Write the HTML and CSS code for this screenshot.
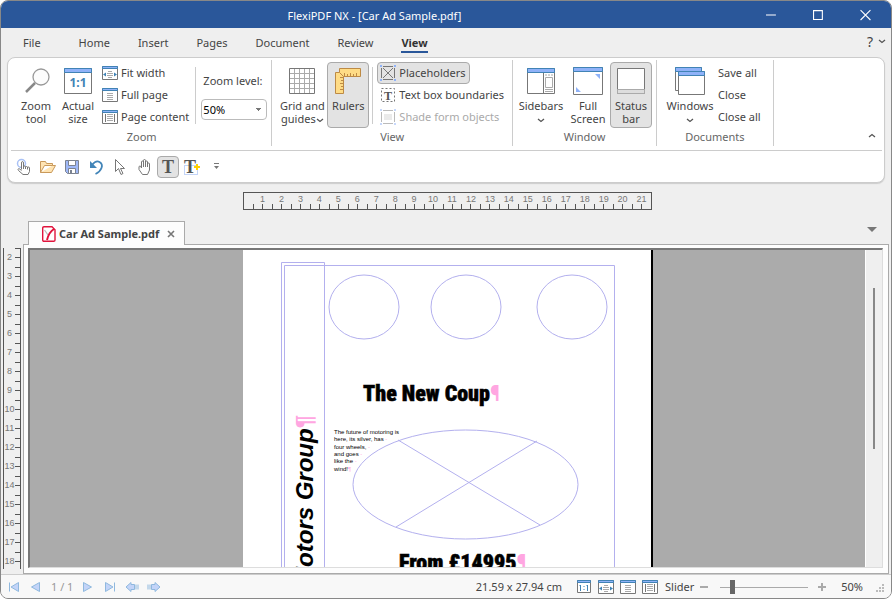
FILE: index.html
```html
<!DOCTYPE html>
<html lang="en">
<head>
<meta charset="utf-8">
<title>FlexiPDF NX - [Car Ad Sample.pdf]</title>
<link rel="stylesheet" href="styles.css">
</head>
<body>
<svg class="defs" aria-hidden="true">
  <symbol id="i-actual" viewBox="0 0 16 16"><path class="wf" d="M1.500 1.500h13v12h-13z"/><path class="hd" d="M1.500 1.500h13v2h-13z"/><path class="bl" d="M4.500 6v6M3.500 6.500h1M11.500 6v6M10.500 6.500h1M8 7v1M8 10v1"/></symbol>
  <symbol id="i-fit" viewBox="0 0 16 16"><path class="wf" d="M.5 1.500h15v13H.5z"/><path class="hd" d="M.5 1.500h15v2H.5z"/><path class="ln" d="M6 6.500h4M5 8.500h6M5 10.500h6M6 12.500h4"/><path class="bf" d="M1 9.500l3-2v4zM15 9.500l-3-2v4z"/></symbol>
  <symbol id="i-full" viewBox="0 0 16 16"><path class="wf" d="M.5 1.500h15v13H.5z"/><path class="hd" d="M.5 1.500h15v2H.5z"/><path class="ln" d="M5 6.500h6M5 8.500h6M5 10.500h6M5 12.500h6"/></symbol>
  <symbol id="i-content" viewBox="0 0 16 16"><path class="wf" d="M.5 1.500h15v13H.5z"/><path class="hd" d="M.5 1.500h15v2H.5z"/><path class="st" d="M3.500 5v8M12.500 5v8"/><path class="ln" d="M5 5.500h6M5 7.500h6M5 9.500h6M5 11.500h6"/></symbol>
  <symbol id="i-down" viewBox="0 0 8 5"><path class="chev" d="M1 1l3 2.500L7 1"/></symbol>
</svg>
<div class="window">
  <header class="titlebar">
    <h1>FlexiPDF NX - [Car Ad Sample.pdf]</h1>
    <div class="caption">
      <button aria-label="Minimize"><svg viewBox="0 0 10 10"><path d="M0 5.500h9"/></svg></button>
      <button aria-label="Maximize"><svg viewBox="0 0 10 10"><path d="M.5 1.500h8v8h-8z"/></svg></button>
      <button aria-label="Close"><svg viewBox="0 0 10 10"><path d="M.5 1l9 9M9.500 1l-9 9"/></svg></button>
    </div>
  </header>

  <nav class="menu">
    <a href="#" class="file">File</a><a href="#">Home</a><a href="#">Insert</a><a href="#">Pages</a><a href="#">Document</a><a href="#">Review</a><a href="#" class="active">View</a>
    <button class="help" aria-label="Help"><span>?</span><svg class="chevron"><use href="#i-down"/></svg></button>
  </nav>

  <section class="ribbon">
    <div class="groups">
      <div class="group">
        <div class="tools zoom-tools">
          <button class="big"><svg viewBox="0 0 32 32"><circle cx="21" cy="12" r="8" fill="#fcfcfc" stroke="#999" stroke-width="1.300"/><path d="M15 18l-9 9" stroke="#888" stroke-width="2.500"/></svg><span>Zoom<br>tool</span></button>
          <button class="big"><svg viewBox="0 0 32 32"><path class="wf" d="M2.500 3.500h27v25h-27z"/><path class="hd" d="M2.500 3.500h27v4h-27z"/><text x="16" y="22" class="ratio">1:1</text></svg><span>Actual<br>size</span></button>
          <div class="stack">
            <button class="small"><svg><use href="#i-fit"/></svg><span>Fit width</span></button>
            <button class="small"><svg><use href="#i-full"/></svg><span>Full page</span></button>
            <button class="small"><svg><use href="#i-content"/></svg><span>Page content</span></button>
          </div>
          <div class="level">
            <label for="zoom">Zoom level:</label>
            <select id="zoom"><option>50%</option></select>
          </div>
        </div>
        <h2>Zoom</h2>
      </div>
      <div class="group">
        <div class="tools view-tools">
          <button class="big wide"><svg viewBox="0 0 32 32"><path class="ln" d="M8.500 4v25M13.500 4v25M18.500 4v25M23.500 4v25M4 8.500h25M4 13.500h25M4 18.500h25M4 23.500h25"/><path class="st" d="M3.500 3.500h25v25h-25z"/></svg><span>Grid and<br>guides<svg class="chevron"><use href="#i-down"/></svg></span></button>
          <button class="big pressed" aria-pressed="true"><svg viewBox="0 0 32 32"><path class="rule" d="M7.500 3.500h21v8h-17l-4-4z"/><path class="rule" d="M3.500 7.500h4l4 4v17h-8z"/><path class="rule" d="M12.500 8v3M15.500 9v2M18.500 8v3M21.500 9v2M24.500 8v3M8 12.500h3M9 15.500h2M8 18.500h3M9 21.500h2M8 24.500h3"/></svg><span>Rulers</span></button>
          <div class="stack">
            <button class="small pressed" aria-pressed="true"><svg viewBox="0 0 16 16"><path class="st" d="M3 1.500h10M3 14.500h10M1.500 3v10M14.500 3v10M3 3l10 10M13 3L3 13"/><path class="dot" d="M0 0h2v2H0zM14 0h2v2h-2zM0 14h2v2H0zM14 14h2v2h-2z"/></svg><span>Placeholders</span></button>
            <button class="small"><svg viewBox="0 0 16 16"><path class="st dash" d="M1.500 1.500h13v13h-13z"/><text x="8" y="13" class="tee">T</text></svg><span>Text box boundaries</span></button>
            <button class="small" disabled><svg viewBox="0 0 16 16"><path class="pale" d="M3 1.500h10M3 14.500h10M1.500 3v10M14.500 3v10"/><path fill="#eaeaea" d="M4 5h8v6H4z"/><path class="dot faint" d="M0 0h2v2H0zM14 0h2v2h-2zM0 14h2v2H0zM14 14h2v2h-2z"/></svg><span>Shade form objects</span></button>
          </div>
        </div>
        <h2>View</h2>
      </div>
      <div class="group">
        <div class="tools window-tools">
          <button class="big wide"><svg viewBox="0 0 32 32"><path class="wf" d="M2.500 3.500h27v25h-27z"/><path class="hd" d="M2.500 3.500h27v4h-27z"/><path class="st" d="M18.500 8v20"/><path class="ln" d="M20.500 12.500h7v10h-7zM20 10h2M23 10h2M26 10h2M20 24.500h8M20 26.500h8"/></svg><span>Sidebars<br><svg class="chevron"><use href="#i-down"/></svg></span></button>
          <button class="big"><svg viewBox="0 0 32 32"><path class="wf" d="M1.500 2.500h29v27h-29z"/><path class="hd" d="M1.500 2.500h29v4h-29z"/><path class="dot" d="M23 9h5v5zM4 22v5h5z"/></svg><span>Full<br>Screen</span></button>
          <button class="big pressed" aria-pressed="true"><svg viewBox="0 0 32 32"><path class="wf" d="M2.500 3.500h27v25h-27z"/><path d="M2.500 24.500h27v4h-27z" fill="#ddd" stroke="#aaa"/></svg><span>Status<br>bar</span></button>
        </div>
        <h2>Window</h2>
      </div>
      <div class="group">
        <div class="tools doc-tools">
          <button class="big wide"><svg viewBox="0 0 32 32"><path class="wf" d="M1.500 2.500h26v23h-26z"/><path class="hd" d="M1.500 2.500h26v4h-26z"/><path class="wf" d="M4.500 6.500h26v23h-26z"/><path class="hd" d="M4.500 6.500h26v4h-26z"/></svg><span>Windows<br><svg class="chevron"><use href="#i-down"/></svg></span></button>
          <div class="stack">
            <button class="small"><span>Save all</span></button>
            <button class="small"><span>Close</span></button>
            <button class="small"><span>Close all</span></button>
          </div>
        </div>
        <h2>Documents</h2>
      </div>
      <button class="collapse" aria-label="Collapse ribbon"><svg class="chevron up"><use href="#i-down"/></svg></button>
    </div>
    <div class="quick">
      <button aria-label="Touch mode"><svg viewBox="0 0 16 16"><circle cx="5.500" cy="4.500" r="4" fill="none" stroke="#a9c1f5" stroke-width="1.500"/><path class="hand" d="M5.500 10.500V4q0-1.500 1-1.500t1 1.500v4q0-1 1-1t1 1v.5q0-1 1-1t1 1V9q0-1 1-1t1 1v3.500l-1.500 3h-5L2.500 11.500q-1-1.500 0-1.800 1-.3 3 1.800M7.500 8v2M9.500 8v2M11.500 8.500v2"/></svg></button>
      <button aria-label="Open"><svg viewBox="0 0 16 16"><path d="M.5 13.500v-11h5l1 2h6v2H4.500l-4 7h11l4-7h-3" fill="#ffe4b3" stroke="#c9995a" stroke-linejoin="round"/></svg></button>
      <button aria-label="Save"><svg viewBox="0 0 16 16"><path d="M1.500 1.500h13v13h-11l-2-2z" fill="#9fb8f7" stroke="#7b8290"/><path d="M4.500 1.500h7v5h-7zM4.500 9.500h7v5h-7z" fill="#fff" stroke="#7b8290"/><path d="M6 11h2v3H6z" fill="#7b8290"/></svg></button>
      <button aria-label="Undo"><svg viewBox="0 0 16 16"><path d="M4 6q4-5 7.500-3t2 6-6 6" fill="none" stroke="#4385b8" stroke-width="1.800"/><path d="M2 2v7h7z" fill="#4385b8"/></svg></button>
      <button aria-label="Select"><svg viewBox="0 0 16 16"><path class="hand" d="M3.500.5v12l3-3 2.500 6 2-1-2.500-5h4z"/></svg></button>
      <button aria-label="Pan"><svg viewBox="0 0 16 16"><path class="hand" d="M5.500 8V3q0-1 1-1t1 1V1.500q0-1 1-1t1 1V3q0-1 1-1t1 1v2q0-1 1-1t1 1v6l-2 4.500h-5l-3.500-5V8q0-1 1-1t1.500 2V4M7.500 3v5M9.500 3v5M11.500 4v4"/></svg></button>
      <button class="pressed" aria-label="Edit text" aria-pressed="true"><svg viewBox="0 0 16 16"><text x="8" y="14" class="tee large">T</text></svg></button>
      <button aria-label="Add text"><svg viewBox="0 0 16 16"><path d="M.5 6.500h13v9H.5z" fill="none" stroke="#89aaf0" stroke-dasharray="1 1"/><text x="6" y="14" class="tee large">T</text><path d="M13 5v6M10 8h6" stroke="#ffd200" stroke-width="2"/></svg></button>
      <button aria-label="Customize toolbar"><svg viewBox="0 0 16 16"><path d="M6 4.500h5" stroke="#777"/><path d="M6 7h5l-2.500 3z" fill="#777"/></svg></button>
    </div>
  </section>

  <div class="hruler"><span>1</span><span>2</span><span>3</span><span>4</span><span>5</span><span>6</span><span>7</span><span>8</span><span>9</span><span>10</span><span>11</span><span>12</span><span>13</span><span>14</span><span>15</span><span>16</span><span>17</span><span>18</span><span>19</span><span>20</span><span>21</span></div>

  <div class="tabs">
    <div class="tab">
      <svg viewBox="0 0 14 16"><path d="M2 .7h8l3 3V14q0 1.300-1.300 1.300H2Q.7 15.300.7 14V2Q.7.7 2 .7z" fill="#fff" stroke="#e0143c" stroke-width="1.400"/><path d="M2.500 4l3.500 5" stroke="#bbb" stroke-width="1.300"/><path d="M12 3Q7 6 5 14" fill="none" stroke="#e0143c" stroke-width="2"/></svg>
      <span>Car Ad Sample.pdf</span>
      <button aria-label="Close tab"><svg viewBox="0 0 8 8"><path d="M1 1l6 6M7 1L1 7" stroke="#777" stroke-width="1.600"/></svg></button>
    </div>
    <button class="tablist" aria-label="Tab list"></button>
  </div>

  <div class="work">
    <div class="vruler"><span>2</span><span>3</span><span>4</span><span>5</span><span>6</span><span>7</span><span>8</span><span>9</span><span>10</span><span>11</span><span>12</span><span>13</span><span>14</span><span>15</span><span>16</span><span>17</span><span>18</span></div>
    <main class="frame">
      <div class="view">
        <div class="canvas">
          <svg class="page" viewBox="0 0 408 480">
            <g class="guide">
              <path d="M38.500 480V12.500h43V480M41.500 480V15.500h330V480"/>
              <ellipse cx="121" cy="57" rx="35" ry="32"/><ellipse cx="223" cy="57" rx="35" ry="32"/><ellipse cx="329" cy="57" rx="35" ry="32"/>
              <ellipse cx="222.500" cy="234.500" rx="112.500" ry="54.500"/>
              <path d="M155 190l142 85M294 191l-141 86"/>
            </g>
            <text class="impact" x="120" y="151">The New Coup<tspan class="mark">¶</tspan></text>
            <text class="impact" x="156" y="320">From £14995<tspan class="mark">¶</tspan></text>
            <text class="side" transform="translate(70 337) rotate(-90)">Motors Group<tspan class="mark">¶</tspan></text>
            <g class="tiny">
              <text x="91" y="184">The future of motoring is</text>
              <text x="91" y="191">here, its silver, has <tspan class="mark">-</tspan></text>
              <text x="91" y="199">four wheels, <tspan class="mark">-</tspan></text>
              <text x="91" y="206">and goes <tspan class="mark">-</tspan></text>
              <text x="91" y="213">like the <tspan class="mark">-</tspan></text>
              <text x="91" y="221">wind!<tspan class="mark">¶</tspan></text>
            </g>
          </svg>
        </div>
        <div class="scroll"><div class="thumb"></div></div>
      </div>
    </main>
  </div>

  <footer class="status">
    <div class="pager">
      <button aria-label="First page"><svg viewBox="0 0 12 12"><path d="M1.500 1.500v9"/><path d="M10.500 1.500v9L3 6z"/></svg></button>
      <button aria-label="Previous page"><svg viewBox="0 0 12 12"><path d="M9.500 1.500v9L1.500 6z"/></svg></button>
      <span>1 / 1</span>
      <button aria-label="Next page"><svg viewBox="0 0 12 12"><path d="M1.500 1.500v9l8-4.500z"/></svg></button>
      <button aria-label="Last page"><svg viewBox="0 0 12 12"><path d="M10.500 1.500v9"/><path d="M1.500 1.500v9L9 6z"/></svg></button>
      <button aria-label="Back"><svg viewBox="0 0 12 12"><path d="M0 6l5-4.500v2h3.500v5H5v2zM10 3.500v5M12 3.500v5"/></svg></button>
      <button aria-label="Forward"><svg viewBox="0 0 12 12"><path d="M12 6L7 1.500v2H3.500v5H7v2zM2 3.500v5M0 3.500v5"/></svg></button>
    </div>
    <span class="size">21.59 x 27.94 cm</span>
    <div class="modes">
      <button aria-label="Actual size"><svg><use href="#i-actual"/></svg></button>
      <button aria-label="Fit width"><svg><use href="#i-fit"/></svg></button>
      <button aria-label="Full page"><svg><use href="#i-full"/></svg></button>
      <button aria-label="Page content"><svg><use href="#i-content"/></svg></button>
    </div>
    <label for="slider">Slider</label>
    <button class="step" aria-label="Zoom out"><svg viewBox="0 0 10 10"><path d="M1 5h8"/></svg></button>
    <input id="slider" type="range" min="0" max="100" value="12">
    <button class="step" aria-label="Zoom in"><svg viewBox="0 0 10 10"><path d="M1 5h8M5 1v8"/></svg></button>
    <span class="percent">50%</span>
    <svg class="grip" viewBox="0 0 9 9"><path d="M6 0h2v2H6zM3 3h2v2H3zM6 3h2v2H6zM0 6h2v2H0zM3 6h2v2H3zM6 6h2v2H6z"/></svg>
  </footer>
</div>
</body>
</html>
```
FILE: styles.css
```css
* { box-sizing: border-box; }
body { margin: 0; background: #fff; color: #444; font: 11px/13px "Noto Sans", "Open Sans", sans-serif; }
button { margin: 0; padding: 0; border: 1px solid transparent; border-radius: 4px; background: none; color: inherit; font: inherit; }
button svg { display: block; }
h1, h2 { margin: 0; font: inherit; }
.defs { position: absolute; width: 0; height: 0; }

/* icon strokes and fills */
.wf { fill: #fff; stroke: #777; }
.hd { fill: #8fb2f8; stroke: #4183b5; }
.st { fill: none; stroke: #777; }
.ln { fill: none; stroke: #aaa; }
.bl { fill: none; stroke: #4183b5; }
.bf { fill: #4183b5; }
.pale { fill: none; stroke: #bbb; }
.dot { fill: #8fb2f8; }
.faint { opacity: .5; }
.dash { stroke-dasharray: 2 2; }
.rule { fill: #ffdc86; stroke: #bd8a45; }
.hand { fill: #fff; stroke: #777; stroke-linejoin: round; }
.chev { fill: none; stroke: #555; stroke-width: 1.3; }
.ratio { fill: #4183b5; font: bold 12px "Noto Sans", sans-serif; text-anchor: middle; }
.tee { fill: #555; font: bold 12px "Liberation Serif", serif; text-anchor: middle; }
.tee.large { font-size: 18px; }
.chevron { display: inline-block; width: 8px; height: 5px; }
.chevron.up { transform: rotate(180deg); }

.window { display: flex; flex-direction: column; height: 100vh; overflow: hidden; border: 1px solid #888; border-radius: 8px; background: #efefef; }

.titlebar { display: flex; align-items: center; flex: none; height: 27px; padding: 2px 2px 0 0; background: #2a579a; color: #fff; }
.titlebar h1 { flex: 1; text-align: center; }
.caption { display: flex; justify-content: space-around; width: 141px; }
.caption button { width: 22px; height: 20px; }
.caption svg { width: 11px; height: 11px; margin: 0 auto 2px; fill: none; stroke: #fff; overflow: visible; }

.menu { display: flex; flex: none; gap: 28px; height: 29px; padding: 6px 4px 0 22px; }
.menu a { height: 19px; padding-top: 2px; color: inherit; text-decoration: none; }
.menu .file { margin-right: 10px; }
.menu .active { border-bottom: 2px solid #2a579a; font-weight: bold; color: #333; }
.help { display: flex; align-items: center; gap: 5px; height: 14px; margin-left: auto; font-size: 14px; }

.ribbon { flex: none; margin: 0 6px; border: 1px solid #ccc; border-radius: 8px; background: #fff; box-shadow: 0 1px 1px #ccc; }
.groups { display: flex; height: 93px; margin: 0 2px 0 3px; padding: 2px 0 4px 1px; border-bottom: 1px solid #ccc; }
.group { display: flex; flex-direction: column; border-right: 1px solid #ccc; padding: 2px 3px 0 3px; }
.group h2 { line-height: 17px; text-align: center; color: #666; }
.tools { display: flex; height: 66px; }
.big { display: flex; flex-direction: column; align-items: center; gap: 2px; width: 42px; padding-top: 2px; white-space: nowrap; }
.big > svg { flex: none; width: 32px; height: 32px; }
.big .chevron { vertical-align: middle; }
.wide { width: 48px; }
.pressed { border-color: #aaa; background: #e3e3e3; }
.stack { display: flex; flex-direction: column; align-items: flex-start; }
.small { display: flex; align-items: center; gap: 3px; height: 22px; padding: 0 3px 0 2px; white-space: nowrap; }
.small svg { width: 16px; height: 16px; }
.small span { padding-bottom: 2px; }
.small:disabled { color: #aaa; }
.level { display: flex; flex-direction: column; gap: 12px; height: 57px; margin: 5px 0 0 2px; padding: 7px 1px 0 5px; border-left: 1px solid #ccc; }
.level label { padding-left: 2px; }
.level select { appearance: none; width: 66px; height: 21px; padding: 0 1px; border: 1px solid #bbb; border-radius: 4px; color: #000; font: inherit; background: linear-gradient(#777, #777) no-repeat right 7px top 10px / 1px 1px, linear-gradient(#777, #777) no-repeat right 6px top 9px / 3px 1px, linear-gradient(#777, #777) no-repeat right 5px top 8px / 5px 1px, #fff; }
.view-tools { gap: 1px; padding-left: 3px; }
.view-tools .stack { margin-left: 2px; padding: 0 1px 0 5px; background: linear-gradient(#ccc, #ccc) no-repeat 0 5px / 1px 57px; }
.window-tools { gap: 1px; padding: 0 1px; }
.window-tools .wide { margin-right: 1px; }
.doc-tools { padding-left: 6px; }
.doc-tools .stack { padding: 0 5px 0 1px; }
.collapse { align-self: flex-end; height: 20px; margin-left: auto; padding: 0 5px 5px; }
.quick { display: flex; align-items: center; gap: 2px; height: 31px; padding: 0 5px; }
.quick button { width: 22px; height: 22px; }
.quick svg { width: 16px; height: 16px; margin: 0 auto; overflow: visible; }

/* one ruler cell is one centimetre: a half tick at its start, a full tick in its middle */
.hruler, .vruler { font: 9px/11px "Liberation Sans", sans-serif; color: #777; }
.hruler { display: flex; flex: none; align-self: center; width: 409px; height: 18px; margin: 9px 0 0 3px; padding-left: 9px; border: 1px solid #555; }
.hruler span { width: 19px; padding-top: 1px; text-align: center; background: linear-gradient(#555, #555) no-repeat 0 100% / 1px 5px, linear-gradient(#555, #555) no-repeat 9px 100% / 1px 5px; }

.tabs { display: flex; flex: none; align-items: flex-end; justify-content: space-between; height: 34px; padding: 0 14px 0 27px; }
.tab { position: relative; z-index: 1; display: flex; align-items: center; gap: 3px; height: 24px; margin-bottom: -1px; padding: 0 8px 0 13px; border: 1px solid #aaa; border-bottom: 0; background: #fdfdfd; font-weight: bold; }
.tab > svg { width: 14px; height: 16px; }
.tab button { padding: 0 0 0 4px; }
.tab button svg { width: 8px; height: 8px; }
.tablist { align-self: center; margin-top: 4px; border: 5px solid transparent; border-top-color: #777; border-bottom: 0; border-radius: 0; }

.work { display: flex; flex: 1; min-height: 0; padding: 0 2px 0 2px; }
.vruler { flex: none; width: 18px; margin: 4px 2px 5px 0; overflow: hidden; border: solid #555; border-width: 0 1px; }
.vruler span { display: block; height: 19px; padding: 4px 5px 0 0; text-align: center; background: linear-gradient(#555, #555) no-repeat 100% 0 / 5px 1px, linear-gradient(#555, #555) no-repeat 100% 9px / 5px 1px; }
.frame { display: flex; flex: 1; min-width: 0; padding: 3px 5px 5px 4px; border: 1px solid #aaa; background: #fdfdfd; }
.view { display: flex; flex: 1; min-width: 0; border: 1px solid #ddd; border-top: 2px solid #777; border-left: 2px solid #777; }
.canvas { display: flex; flex: 1; justify-content: center; min-width: 0; overflow: hidden; background: #ababab; }
.page { flex: none; align-self: flex-start; width: 410px; height: 480px; border-right: 2px solid #000; background: #fff; }
.scroll { display: flex; justify-content: center; width: 17px; padding-top: 38px; border-left: 1px solid #fff; background: #efefef; }
.thumb { width: 2px; height: 161px; background: #888; }

.guide { fill: none; stroke: #b3b0ee; }
.impact { font: 900 22px Impact, "Roboto Condensed", Roboto, sans-serif; stroke: #000; stroke-width: .5; }
.side { font: italic bold 24px "Liberation Sans", sans-serif; }
.tiny { font: 6px "Liberation Sans", sans-serif; }
.mark { fill: #ffa6e1; stroke: none; font-style: normal; }

.status { display: flex; flex: none; align-items: center; height: 24px; padding: 0 6px; border-top: 1px solid #ccc; background: #f8f8f8; }
.pager { display: flex; align-items: center; gap: 8px; flex: 1; color: #999; }
.pager button, .modes button { border: 0; }
.pager svg { width: 14px; height: 12px; fill: #c3d4f8; stroke: #8fb8de; overflow: visible; }
.modes { display: flex; gap: 6px; margin: 0 7px 0 14px; }
.modes svg { width: 16px; height: 16px; }
.step { width: 20px; }
.step svg { width: 10px; height: 10px; margin: 0 auto; stroke: #aaa; stroke-width: 2; }
#slider { appearance: none; width: 88px; height: 14px; margin: 0 4px 0 6px; background: linear-gradient(#aaa, #aaa) no-repeat 0 7px / 100% 1px; }
#slider::-webkit-slider-thumb { appearance: none; width: 5px; height: 14px; background: #666; }
.percent { margin: 0 13px 0 9px; }
.grip { width: 9px; height: 9px; margin-top: 4px; fill: #bbb; }
```
